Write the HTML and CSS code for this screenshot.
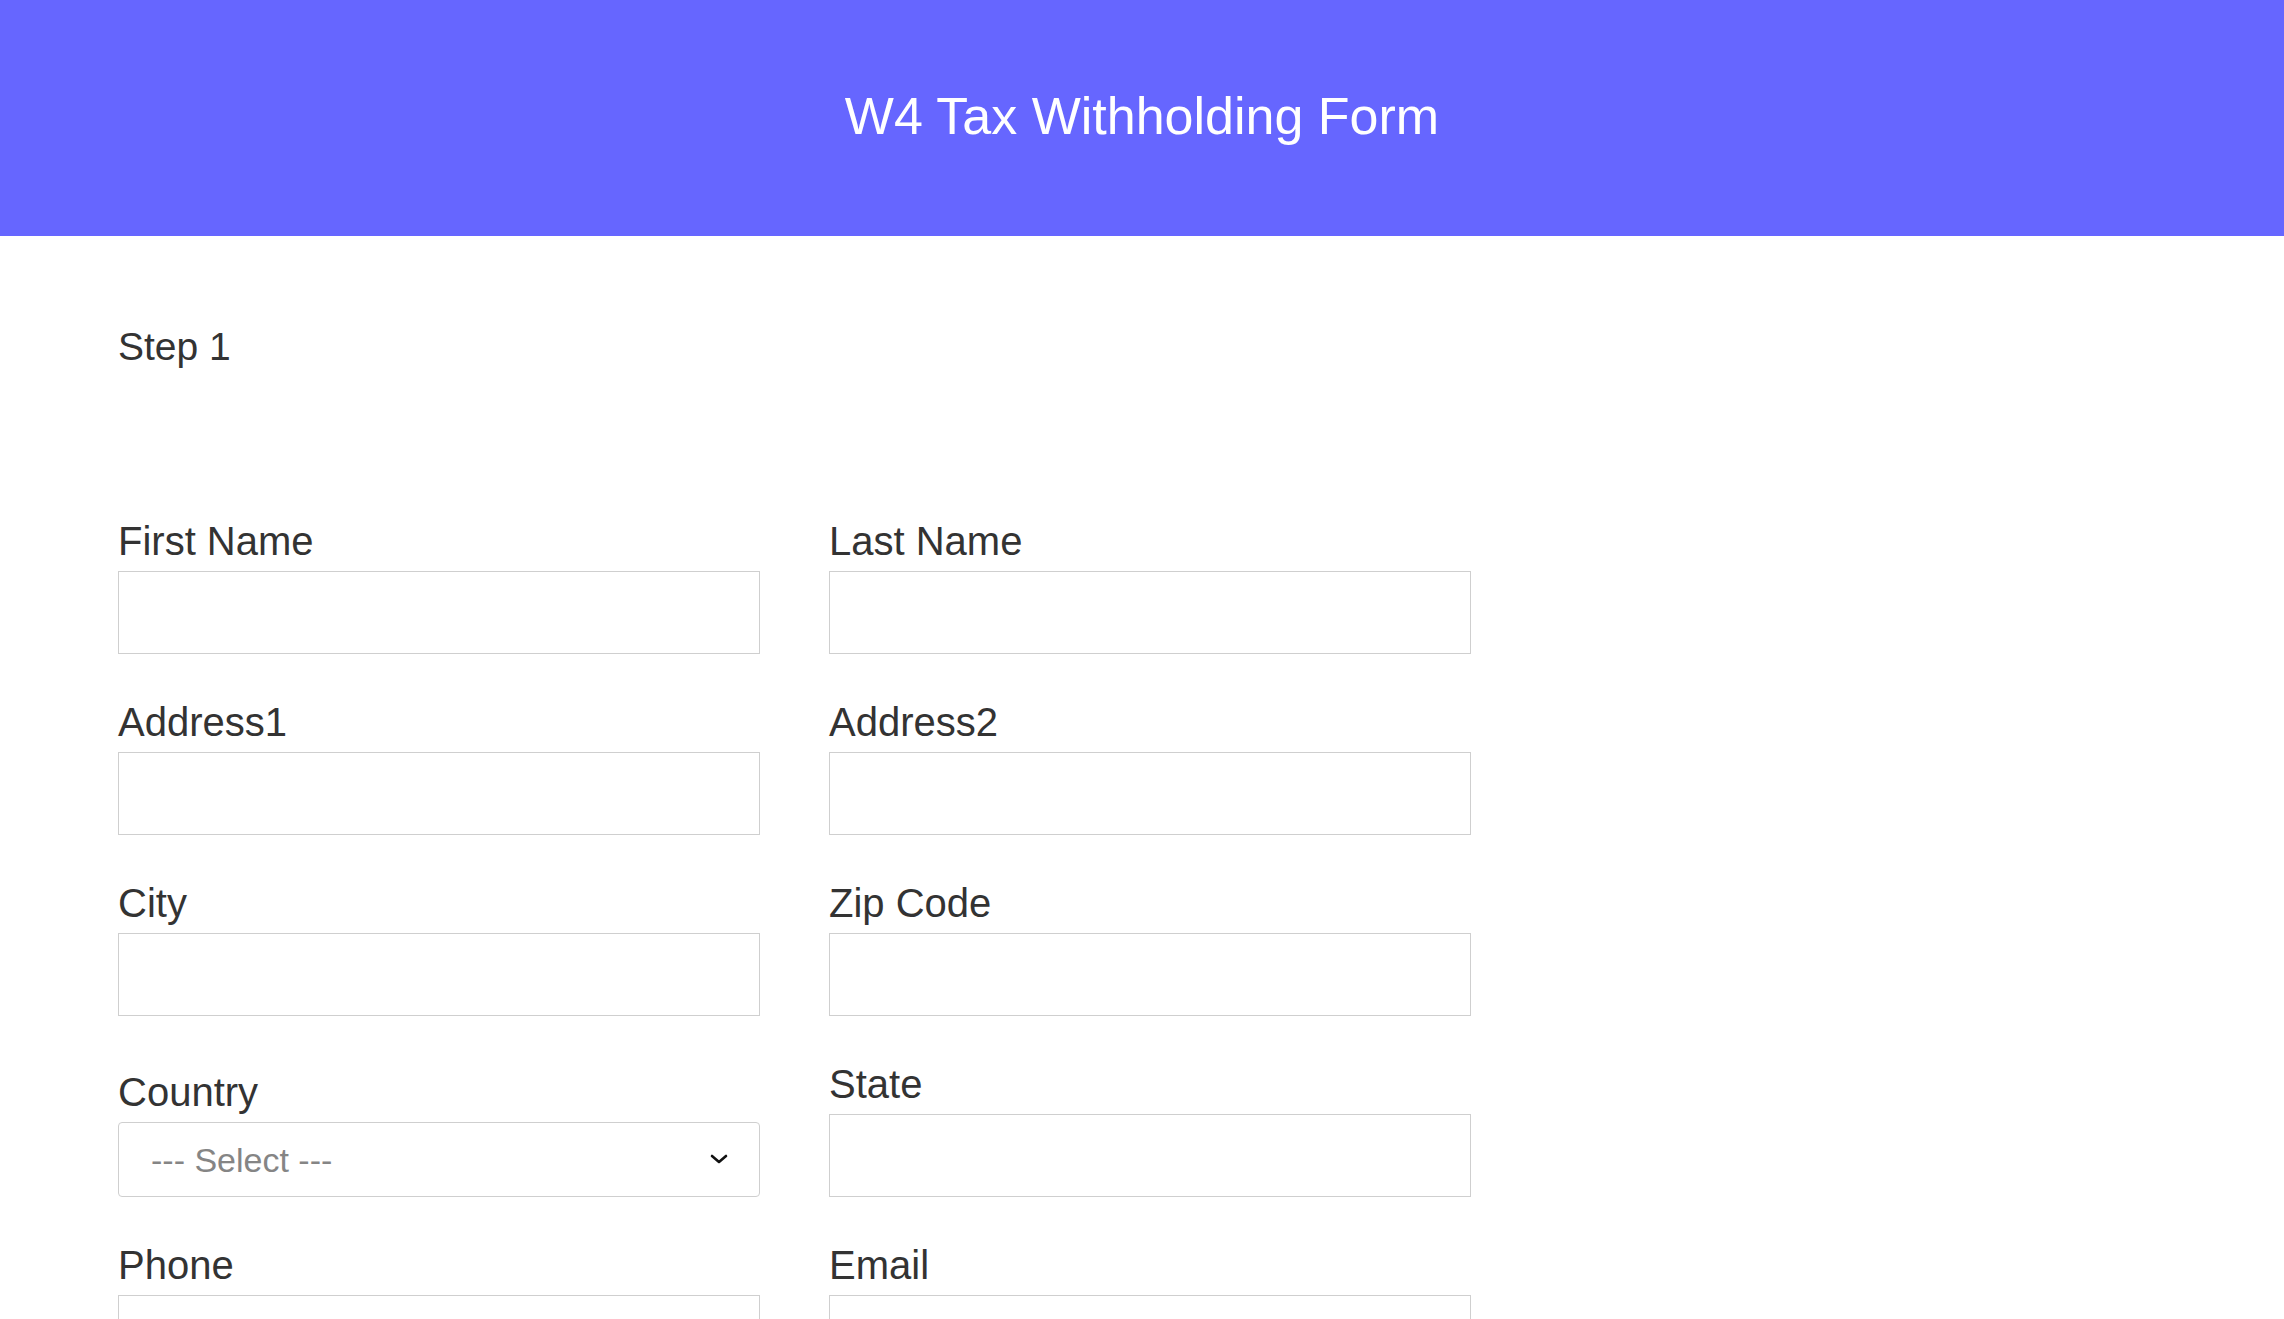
FILE: index.html
```html
<!DOCTYPE html>
<html lang="en">
<head>
<meta charset="utf-8">
<title>W4 Tax Withholding Form</title>
<link rel="stylesheet" href="styles.css">
</head>
<body>
<header class="top">
  <h1 class="title">W4 Tax Withholding Form</h1>
</header>
<main class="content">
  <h2 class="step">Step 1</h2>
  <form class="grid">
    <div class="field"><label class="label">First Name</label><input class="input" type="text"></div>
    <div class="field"><label class="label">Last Name</label><input class="input" type="text"></div>
    <div class="field"><label class="label">Address1</label><input class="input" type="text"></div>
    <div class="field"><label class="label">Address2</label><input class="input" type="text"></div>
    <div class="field"><label class="label">City</label><input class="input" type="text"></div>
    <div class="field"><label class="label">Zip Code</label><input class="input" type="text"></div>
    <div class="field">
      <label class="label">Country</label>
      <div class="select-wrap">
        <select class="select"><option>--- Select ---</option></select>
        <svg class="chevron" width="18" height="10" viewBox="0 0 18 10"><path d="M2 2 L9 8 L16 2" fill="none" stroke="#111" stroke-width="2.6" stroke-linecap="round" stroke-linejoin="round"/></svg>
      </div>
    </div>
    <div class="field"><label class="label">State</label><input class="input" type="text"></div>
    <div class="field"><label class="label">Phone</label><input class="input" type="text"></div>
    <div class="field"><label class="label">Email</label><input class="input" type="text"></div>
  </form>
</main>
</body>
</html>
```
FILE: styles.css
```css
* { box-sizing: border-box; }
body {
  margin: 0;
  font-family: "Liberation Sans", Arial, sans-serif;
  color: #333;
  background: #fff;
}
.top {
  background: #6666ff;
  height: 236px;
  padding-top: 86px;
}
.title {
  margin: 0;
  text-align: center;
  color: #fff;
  font-weight: normal;
  font-size: 52px;
  line-height: 60px;
}
.content {
  padding: 0 118px 120px;
}
.step {
  margin: 89px 0 0;
  font-weight: normal;
  font-size: 39px;
  line-height: 44px;
}
.grid {
  display: grid;
  grid-template-columns: 642px 642px;
  column-gap: 69px;
  row-gap: 46px;
  align-items: end;
  margin-top: 150px;
}
.field {
  display: flex;
  flex-direction: column;
}
.label {
  display: block;
  font-size: 40px;
  line-height: 45px;
  margin-bottom: 7px;
}
.input {
  display: block;
  width: 100%;
  height: 83px;
  border: 1.5px solid #cfcfcf;
  border-radius: 0;
  background: #fff;
  font: inherit;
  font-size: 34px;
  padding: 0 20px;
  outline: none;
}
.select-wrap {
  position: relative;
}
.select {
  appearance: none;
  -webkit-appearance: none;
  display: block;
  width: 100%;
  height: 75px;
  border: 1.5px solid #cfcfcf;
  border-radius: 4px;
  background: #fff;
  font-family: "Liberation Sans", Arial, sans-serif;
  font-size: 34px;
  color: #858585;
  padding: 0 60px 0 32px;
  outline: none;
}
.chevron {
  position: absolute;
  right: 32px;
  top: 32px;
  pointer-events: none;
}
```
